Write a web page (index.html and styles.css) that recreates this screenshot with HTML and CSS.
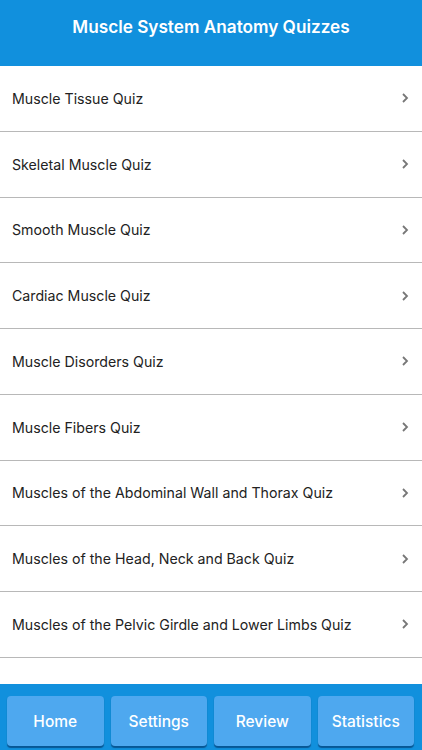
FILE: index.html
```html
<!DOCTYPE html>
<html lang="en">
<head>
  <meta charset="UTF-8" />
  <title>Muscle System Anatomy Quizzes</title>
  <link rel="stylesheet" href="styles.css">
</head>
<body>

  <header class="top-bar">
    <h1>Muscle System Anatomy Quizzes</h1>
  </header>

  <ul class="quiz-list">
    <li class="quiz-item"><span>Muscle Tissue Quiz</span><svg class="chevron" viewBox="0 0 8 12"><path d="M2 2l4 4-4 4" /></svg></li>
    <li class="quiz-item"><span>Skeletal Muscle Quiz</span><svg class="chevron" viewBox="0 0 8 12"><path d="M2 2l4 4-4 4" /></svg></li>
    <li class="quiz-item"><span>Smooth Muscle Quiz</span><svg class="chevron" viewBox="0 0 8 12"><path d="M2 2l4 4-4 4" /></svg></li>
    <li class="quiz-item"><span>Cardiac Muscle Quiz</span><svg class="chevron" viewBox="0 0 8 12"><path d="M2 2l4 4-4 4" /></svg></li>
    <li class="quiz-item"><span>Muscle Disorders Quiz</span><svg class="chevron" viewBox="0 0 8 12"><path d="M2 2l4 4-4 4" /></svg></li>
    <li class="quiz-item"><span>Muscle Fibers Quiz</span><svg class="chevron" viewBox="0 0 8 12"><path d="M2 2l4 4-4 4" /></svg></li>
    <li class="quiz-item"><span>Muscles of the Abdominal Wall and Thorax Quiz</span><svg class="chevron" viewBox="0 0 8 12"><path d="M2 2l4 4-4 4" /></svg></li>
    <li class="quiz-item"><span>Muscles of the Head, Neck and Back Quiz</span><svg class="chevron" viewBox="0 0 8 12"><path d="M2 2l4 4-4 4" /></svg></li>
    <li class="quiz-item"><span>Muscles of the Pelvic Girdle and Lower Limbs Quiz</span><svg class="chevron" viewBox="0 0 8 12"><path d="M2 2l4 4-4 4" /></svg></li>
  </ul>

  <nav class="bottom-bar">
    <a href="#" class="nav-btn">Home</a>
    <a href="#" class="nav-btn">Settings</a>
    <a href="#" class="nav-btn">Review</a>
    <a href="#" class="nav-btn">Statistics</a>
  </nav>

</body>
</html>
```

FILE: styles.css
```css
html, body {
  margin: 0;
  padding: 0;
  height: 100%;
  font-family: "Inter", "Liberation Sans", sans-serif;
  background: #fff;
  color: #222;
}

body {
  display: flex;
  flex-direction: column;
  overflow: hidden;
}

.top-bar {
  background: #1190dd;
  height: 66px;
  flex-shrink: 0;
  display: flex;
  align-items: center;
  justify-content: center;
}

.top-bar h1 {
  margin: 0 0 13px;
  color: #fff;
  font-size: 17.2px;
  font-weight: 600;
}

.quiz-list {
  list-style: none;
  margin: 0;
  padding: 0;
  flex: 1;
}

.quiz-item {
  height: 64.75px;
  border-bottom: 1px solid #b8b8b8;
  display: flex;
  align-items: center;
  justify-content: space-between;
  padding: 0 13px 0 12px;
  font-size: 14.2px;
}

.chevron {
  width: 8px;
  height: 12px;
  fill: none;
  stroke: #777;
  stroke-width: 1.8;
}

.bottom-bar {
  background: #1190dd;
  height: 66px;
  flex-shrink: 0;
  box-sizing: border-box;
  padding: 12px 8px 4px 7px;
  display: flex;
  gap: 7px;
}

.nav-btn {
  flex: 1;
  background: #4ea8ef;
  border-radius: 4px;
  box-shadow: 0 1.5px 1px rgba(0, 40, 90, 0.55);
  color: #fff;
  text-decoration: none;
  font-size: 15.5px;
  font-weight: 500;
  display: flex;
  align-items: center;
  justify-content: center;
}
```
